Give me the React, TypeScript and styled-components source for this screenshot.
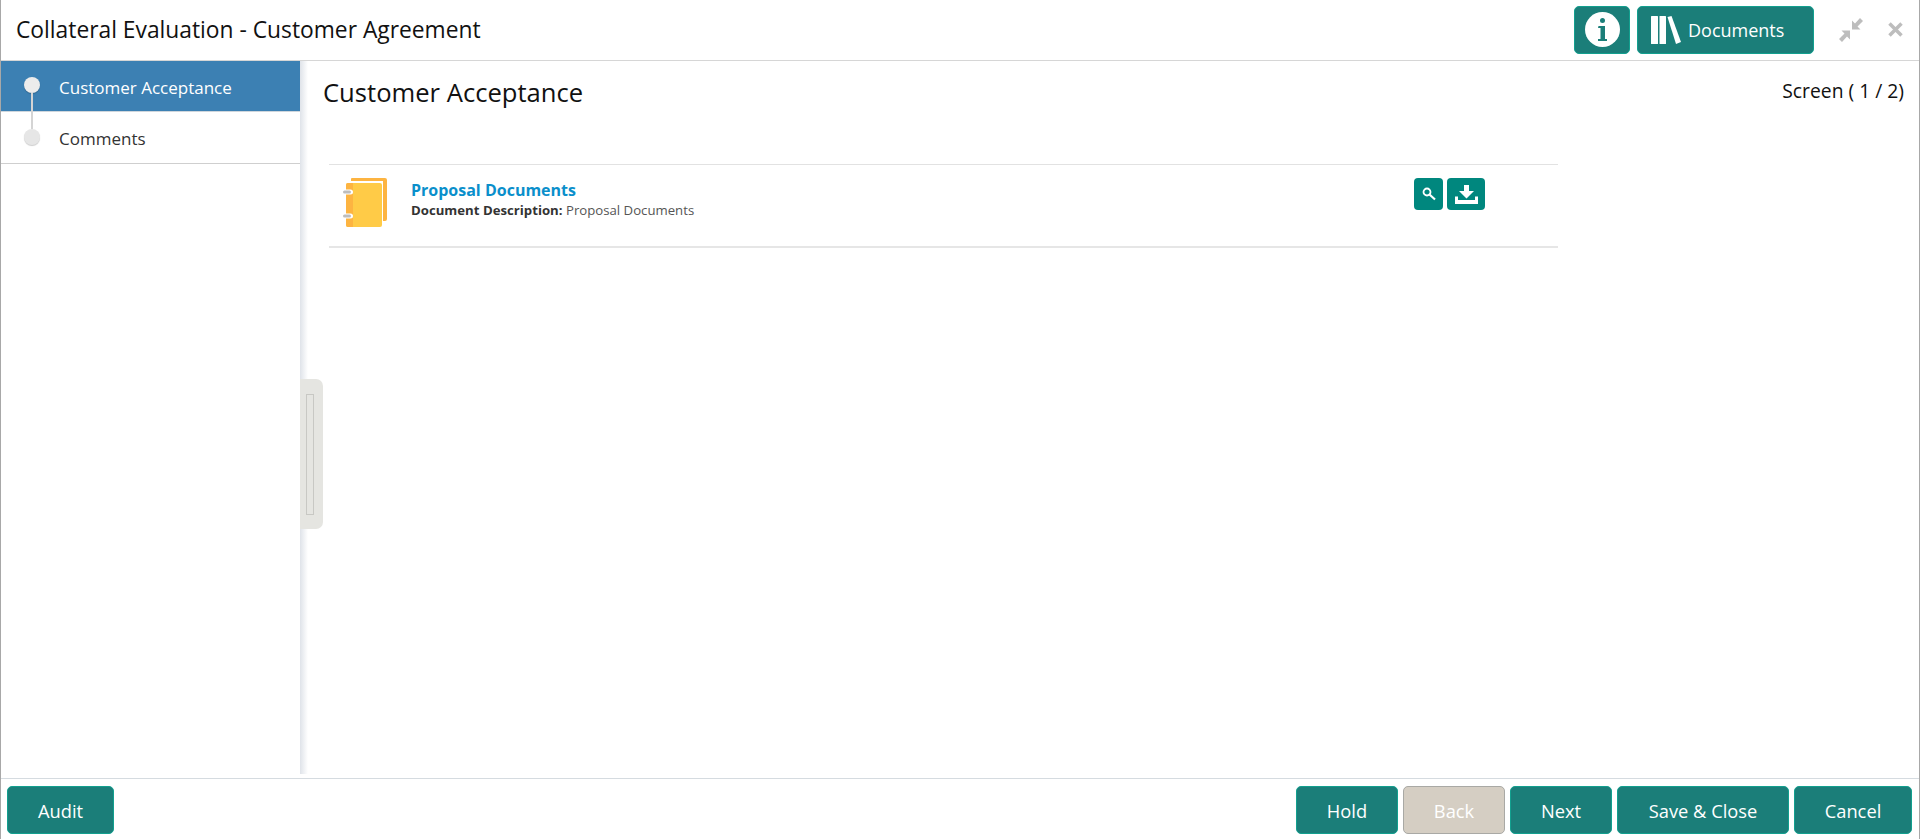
import React from "react";
import styled, { createGlobalStyle } from "styled-components";

const GlobalStyle = createGlobalStyle`
  html, body {
    margin: 0;
    padding: 0;
    background: #fff;
    font-family: "Open Sans", "Noto Sans", sans-serif;
    overflow: hidden;
  }
  * {
    box-sizing: border-box;
  }
`;

const Page = styled.div`
  display: flex;
  flex-direction: column;
  height: 839px;
  border-left: 1px solid #a8a8a8;
  border-right: 1px solid #a8a8a8;
`;

const Header = styled.header`
  display: flex;
  align-items: center;
  height: 61px;
  flex: none;
  padding: 0 16px 1px 15px;
  border-bottom: 1px solid #d6d6d6;
`;

const HeaderTitle = styled.h1`
  flex: 1;
  margin: 0;
  font-size: 22.8px;
  font-weight: 400;
  color: #111;
`;

const TealButton = styled.button<{ $width: number }>`
  display: flex;
  align-items: center;
  justify-content: center;
  width: ${(p) => p.$width}px;
  height: 48px;
  padding: 2px 0 0;
  border: 1px solid #12a08f;
  border-radius: 5px;
  background: #1b7e79;
  color: #fff;
  font-family: inherit;
  font-size: 18.3px;
`;

const DisabledButton = styled(TealButton)`
  border-color: #a9a9a5;
  background: #d5cec3;
`;

const HeaderActions = styled.div`
  display: flex;
  align-items: center;
  gap: 7px;
`;

const InfoButton = styled(TealButton)`
  padding: 0;
`;

const DocumentsButton = styled(TealButton)`
  justify-content: flex-start;
  gap: 7px;
  padding: 0 0 0 13px;
  font-size: 18px;
`;

const WindowControls = styled.div`
  display: flex;
  align-items: center;
  gap: 25px;
  margin-left: 25px;
`;

const Body = styled.div`
  position: relative;
  display: flex;
  flex: 1;
  min-height: 0;
  padding-bottom: 4px;
`;

const Sidebar = styled.nav`
  width: 307px;
  flex: none;
  padding-right: 8px;
  background: linear-gradient(to right, #fff 299px, #dfe3e9 299px, #fff 307px);
`;

const StepList = styled.div`
  background: #fff;
  border-bottom: 1px solid #cfcfcf;
`;

const Step = styled.div<{ $active?: boolean }>`
  position: relative;
  display: flex;
  align-items: center;
  height: 51px;
  padding: 2px 0 0 58px;
  font-size: 17px;
  color: ${(p) => (p.$active ? "#fff" : "#333")};
  background: ${(p) => (p.$active ? "#3c80b3" : "#fff")};
  border-bottom: ${(p) => (p.$active ? "1px solid #cfd6dc" : "none")};
`;

const StepDot = styled.span<{ $active?: boolean }>`
  position: absolute;
  left: 23px;
  top: ${(p) => (p.$active ? 16 : 17)}px;
  width: 16px;
  height: 16px;
  border-radius: 50%;
  background: ${(p) => (p.$active ? "#ececec" : "#e6e6e6")};
  box-shadow: 0 1px 1px rgba(0, 0, 0, 0.2);
  z-index: 1;
`;

const StepLine = styled.span`
  position: absolute;
  left: 30px;
  top: 32px;
  width: 2px;
  height: 36px;
  background: #d4d4d4;
  z-index: 1;
`;

const Handle = styled.div`
  position: absolute;
  left: 299px;
  top: 318px;
  display: flex;
  align-items: center;
  width: 23px;
  height: 150px;
  padding-left: 6px;
  border-radius: 0 7px 7px 0;
  background: #e5e5e1;
`;

const HandleGrip = styled.div`
  width: 8px;
  height: 121px;
  border: 1px solid #c8c8c4;
`;

const Main = styled.main`
  flex: 1;
  min-width: 0;
  padding: 0 15px 0 15px;
`;

const MainHead = styled.div`
  display: flex;
  justify-content: space-between;
  height: 103px;
`;

const MainTitle = styled.h2`
  margin: 14px 0 0;
  font-size: 25.6px;
  font-weight: 400;
  line-height: 36px;
  color: #111;
`;

const ScreenCount = styled.div`
  margin-top: 16px;
  font-size: 19.3px;
  line-height: 28px;
  color: #111;
`;

const DocList = styled.div`
  width: 1229px;
  margin-left: 6px;
  border-top: 1px solid #e2e2e2;
  border-bottom: 2px solid #e6e6e6;
`;

const DocRow = styled.div`
  display: flex;
  align-items: flex-start;
  height: 81px;
  padding: 13px 73px 0 14px;
`;

const DocText = styled.div`
  flex: 1;
  margin-left: 24px;
  padding-top: 2px;
`;

const DocName = styled.a`
  display: block;
  font-size: 16px;
  font-weight: 700;
  line-height: 20px;
  color: #0a8fcb;
`;

const DocDescription = styled.div`
  margin-top: 1px;
  font-size: 13.2px;
  line-height: 19px;
  color: #555;

  strong {
    color: #333;
  }
`;

const RowActions = styled.div`
  display: flex;
  gap: 4px;
`;

const IconButton = styled.button<{ $width: number }>`
  display: flex;
  align-items: center;
  justify-content: center;
  width: ${(p) => p.$width}px;
  height: 32px;
  padding: 0;
  border: none;
  border-radius: 4px;
  background: #00877e;
`;

const Footer = styled.footer`
  display: flex;
  align-items: center;
  justify-content: space-between;
  height: 61px;
  flex: none;
  padding: 1px 7px 0 6px;
  border-top: 1px solid #d5dbe0;
`;

const FooterGroup = styled.div`
  display: flex;
  gap: 5px;
`;

const FolderIcon = () => (
  <svg width="44" height="49" viewBox="0 0 44 49" style={{ flex: "none" }}>
    <path d="M8 1a1 1 0 0 1 1-1h33a2 2 0 0 1 2 2v39a2 2 0 0 1-2 2h-2V3H8z" fill="#fdb441" />
    <path d="M3 7a2 2 0 0 1 2-2h32a2 2 0 0 1 2 2v40a2 2 0 0 1-2 2H5a2 2 0 0 1-2-2z" fill="#ffcb47" />
    <path d="M3 7a2 2 0 0 1 2-2h5v44H5a2 2 0 0 1-2-2z" fill="#fdb441" />
    <rect x="0" y="11.500" width="10" height="5" rx="2.500" fill="#fff" />
    <rect x="0" y="35.500" width="10" height="5" rx="2.500" fill="#fff" />
    <rect x="0" y="12.500" width="8" height="3" rx="1.500" fill="#bdbdbd" />
    <rect x="0" y="36.500" width="8" height="3" rx="1.500" fill="#bdbdbd" />
  </svg>
);

const InfoIcon = () => (
  <svg width="35" height="35" viewBox="0 0 35 35">
    <circle cx="17.500" cy="17.500" r="17.500" fill="#fff" />
    <circle cx="17.500" cy="8.500" r="2.500" fill="#1b7e79" />
    <path d="M13.500 14h6.500v13h2v2h-9v-2h2.500v-11h-2.500z" fill="#1b7e79" />
  </svg>
);

const BooksIcon = () => (
  <svg width="30" height="28" viewBox="0 0 30 28" fill="#fff">
    <rect x="0" y="0" width="7" height="28" rx="0.5" />
    <rect x="8.500" y="0" width="6.500" height="28" rx="0.5" />
    <path d="M16.500 1l4-1 9.500 26-5 2z" />
  </svg>
);

const CompressIcon = () => (
  <svg width="24" height="24" viewBox="0 0 24 24" fill="#bdbdbd">
    <path d="M21 0l3 3-5.500 5.500 3 3H13V2.500l3 3z" />
    <path d="M3 24l-3-3 5.500-5.500-3-3H11v9l-3-3z" />
  </svg>
);

const CloseIcon = () => (
  <svg width="15" height="15" viewBox="0 0 15 15">
    <path d="M1.500 1.500l12 12M13.500 1.500l-12 12" stroke="#bdbdbd" strokeWidth="3.500" />
  </svg>
);

const SearchIcon = () => (
  <svg width="14" height="14" viewBox="0 0 14 14" fill="none" stroke="#fff">
    <circle cx="5" cy="5" r="3.500" strokeWidth="1.800" />
    <path d="M7.500 7.500l5.500 5" strokeWidth="2.200" />
  </svg>
);

const DownloadIcon = () => (
  <svg width="23" height="19" viewBox="0 0 23 19" fill="#fff">
    <path d="M9 0h5v6h5l-7.500 7.500L4 6h5z" />
    <path d="M0 11.500h3v3.500h17v-3.500h3V19H0z" />
  </svg>
);

const App: React.FC = () => {
  return (
    <>
      <GlobalStyle />
      <Page>
        <Header>
          <HeaderTitle>Collateral Evaluation - Customer Agreement</HeaderTitle>
          <HeaderActions>
            <InfoButton $width={56}>
              <InfoIcon />
            </InfoButton>
            <DocumentsButton $width={177}>
              <BooksIcon />
              Documents
            </DocumentsButton>
          </HeaderActions>
          <WindowControls>
            <CompressIcon />
            <CloseIcon />
          </WindowControls>
        </Header>
        <Body>
          <Sidebar>
            <StepList>
              <Step $active>
                <StepDot $active />
                <StepLine />
                Customer Acceptance
              </Step>
              <Step>
                <StepDot />
                Comments
              </Step>
            </StepList>
          </Sidebar>
          <Handle>
            <HandleGrip />
          </Handle>
          <Main>
            <MainHead>
              <MainTitle>Customer Acceptance</MainTitle>
              <ScreenCount>Screen ( 1 / 2)</ScreenCount>
            </MainHead>
            <DocList>
              <DocRow>
                <FolderIcon />
                <DocText>
                  <DocName>Proposal Documents</DocName>
                  <DocDescription>
                    <strong>Document Description:</strong> Proposal Documents
                  </DocDescription>
                </DocText>
                <RowActions>
                  <IconButton $width={29}>
                    <SearchIcon />
                  </IconButton>
                  <IconButton $width={38}>
                    <DownloadIcon />
                  </IconButton>
                </RowActions>
              </DocRow>
            </DocList>
          </Main>
        </Body>
        <Footer>
          <TealButton $width={107}>Audit</TealButton>
          <FooterGroup>
            <TealButton $width={102}>Hold</TealButton>
            <DisabledButton $width={102}>Back</DisabledButton>
            <TealButton $width={102}>Next</TealButton>
            <TealButton $width={172}>Save &amp; Close</TealButton>
            <TealButton $width={118}>Cancel</TealButton>
          </FooterGroup>
        </Footer>
      </Page>
    </>
  );
};

export default App;
